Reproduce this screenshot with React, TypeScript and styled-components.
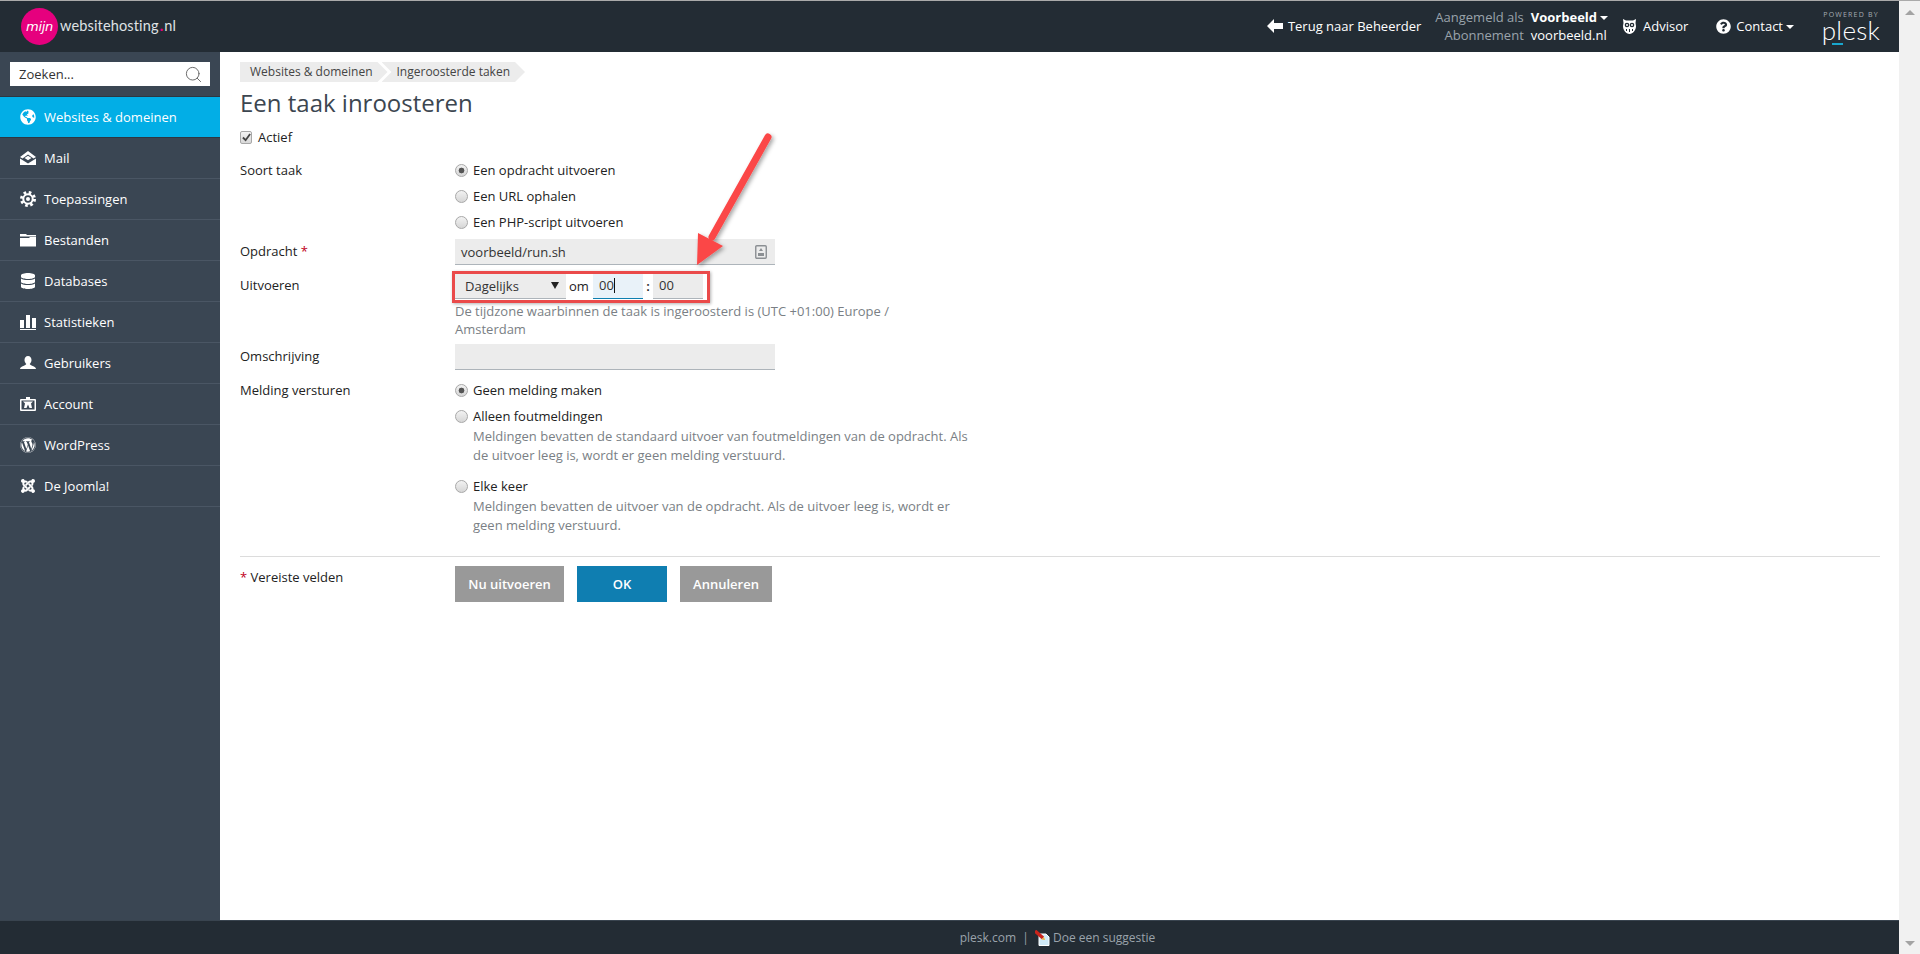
import React from "react";
import styled, { createGlobalStyle } from "styled-components";
import { FaGlobeAmericas, FaDatabase, FaWordpress, FaJoomla, FaQuestionCircle } from "react-icons/fa";
import { Search } from "lucide-react";

const Global = createGlobalStyle`
  html, body { margin: 0; padding: 0; height: 100%; overflow: hidden; }
  body { font-family: "Open Sans", "Liberation Sans", sans-serif; font-size: 13px; color: #222; }
  * { box-sizing: border-box; }
`;

const Page = styled.div`
  display: flex;
  width: 1920px;
  height: 954px;
  overflow: hidden;
`;
const Window = styled.div`
  flex: 1;
  min-width: 0;
  display: flex;
  flex-direction: column;
`;
const Scrollbar = styled.div`
  width: 21px;
  background: #f1f1f1;
  border-top: 1px solid #aaa;
  display: flex;
  flex-direction: column;
  justify-content: space-between;
  align-items: center;
  padding: 9px 0 8px;
`;
const ScrollArrow = styled.div<{ $down?: boolean }>`
  width: 0;
  height: 0;
  border-left: 5px solid transparent;
  border-right: 5px solid transparent;
  ${(p) => (p.$down ? "border-top: 5px solid #a3a3a3;" : "border-bottom: 5px solid #a3a3a3;")}
`;

const Header = styled.header`
  height: 52px;
  flex: none;
  background: #232c34;
  border-top: 1px solid #aaa;
  display: flex;
  align-items: center;
  color: #fff;
  padding-left: 21px;
`;
const Logo = styled.div`
  display: flex;
  align-items: center;
`;
const LogoCircle = styled.div`
  width: 37px;
  height: 37px;
  border-radius: 50%;
  background: #e6007e;
  color: #fff;
  display: flex;
  align-items: center;
  justify-content: center;
  font-family: "DejaVu Sans", sans-serif;
  font-style: italic;
  font-size: 13px;
  letter-spacing: -0.3px;
  margin-right: 2px;
`;
const LogoText = styled.div`
  font-family: "Lato", sans-serif;
  font-size: 14.5px;
  color: #dfe2e5;
  letter-spacing: 0.15px;
  margin-top: -2px;
`;
const LogoDot = styled.span`
  color: #e6007e;
  font-weight: 900;
  margin: 0 1px;
`;
const HeaderRight = styled.div`
  margin-left: auto;
  display: flex;
  align-items: center;
  height: 100%;
  padding-bottom: 1px;
`;
const HeaderLink = styled.div<{ $ml: number; $gap?: number }>`
  display: flex;
  align-items: center;
  gap: ${(p) => p.$gap ?? 5}px;
  margin-left: ${(p) => p.$ml}px;
  font-size: 13px;
  color: #fff;
`;
const Caret = styled.span`
  display: inline-block;
  width: 0;
  height: 0;
  border-left: 4px solid transparent;
  border-right: 4px solid transparent;
  border-top: 4px solid #fff;
  margin-left: 3px;
  vertical-align: 2px;
`;
const Account = styled.div`
  display: grid;
  grid-template-columns: auto auto;
  column-gap: 7px;
  margin-left: 14px;
  line-height: 18px;
`;
const AccountLabel = styled.div`
  color: #9aa3ab;
  text-align: right;
`;
const AccountValue = styled.div<{ $bold?: boolean }>`
  color: #fff;
  font-weight: ${(p) => (p.$bold ? 700 : 400)};
`;
const PleskBox = styled.div`
  margin: 0 19px 0 28px;
  width: 58px;
  display: flex;
  flex-direction: column;
  align-items: center;
  position: relative;
`;
const Powered = styled.div`
  font-size: 7px;
  letter-spacing: 1.2px;
  color: #a6adb3;
  line-height: 9px;
  white-space: nowrap;
`;
const PleskWord = styled.div`
  font-family: "Lato", sans-serif;
  font-weight: 300;
  font-size: 26px;
  line-height: 24px;
  letter-spacing: 0.3px;
  color: #fff;
  margin-top: -1px;
`;
const PleskBar = styled.div`
  position: absolute;
  left: 10px;
  bottom: -3px;
  width: 11px;
  height: 2px;
  background: #19a7ce;
`;

const Body = styled.div`
  flex: 1;
  min-height: 0;
  display: flex;
`;
const Sidebar = styled.nav`
  width: 220px;
  flex: none;
  background: #3a4653;
`;
const SearchBox = styled.div`
  height: 45px;
  padding: 10px 10px 0;
  border-bottom: 1px solid #2d3742;
`;
const SearchInner = styled.div`
  height: 24px;
  background: #fff;
  display: flex;
  align-items: center;
  justify-content: space-between;
  padding: 0 7px 0 9px;
  color: #333;
  font-size: 13px;
`;
const NavItem = styled.div<{ $active?: boolean }>`
  height: 41px;
  display: flex;
  align-items: center;
  gap: 8px;
  padding-left: 20px;
  font-size: 13px;
  color: #fff;
  background: ${(p) => (p.$active ? "#02aee6" : "transparent")};
  border-bottom: 1px solid ${(p) => (p.$active ? "#2d3742" : "#4a5664")};
  svg { width: 16px; height: 16px; flex: none; fill: #fff; }
`;

const Main = styled.main`
  flex: 1;
  min-width: 0;
  padding: 10px 19px 0 20px;
  background: #fff;
`;
const Crumbs = styled.div`
  display: flex;
  height: 20px;
`;
const Crumb = styled.div<{ $first?: boolean }>`
  background: #ececec;
  font-size: 12px;
  line-height: 20px;
  color: #444;
  padding: 0 15px 0 ${(p) => (p.$first ? 10 : 15)}px;
  margin-right: ${(p) => (p.$first ? -6 : 0)}px;
  clip-path: polygon(
    0 0, calc(100% - 10px) 0, 100% 50%, calc(100% - 10px) 100%, 0 100%
    ${(p) => (p.$first ? "" : ", 10px 50%")}
  );
`;
const Title = styled.h1`
  margin: 5px 0 0;
  font-size: 24px;
  font-weight: 400;
  line-height: 32px;
  color: #3c4650;
`;
const CheckRow = styled.div`
  display: flex;
  align-items: center;
  gap: 6px;
  height: 20px;
  margin-top: 8px;
`;
const CheckBox = styled.span`
  width: 12px;
  height: 13px;
  border: 1px solid #a8a8a8;
  border-radius: 2px;
  background: linear-gradient(#f4f4f4, #d8d8d8);
  display: flex;
  align-items: center;
  justify-content: center;
  svg { width: 9px; height: 9px; }
`;
const Form = styled.div`
  display: grid;
  grid-template-columns: 215px 1fr;
  margin-top: 10px;
`;
const Label = styled.div<{ $top?: number }>`
  line-height: 18px;
  padding-top: ${(p) => p.$top ?? 4}px;
`;
const Req = styled.span`
  color: #c0001a;
`;
const Field = styled.div<{ $mb?: number; $pt?: number }>`
  margin-bottom: ${(p) => p.$mb ?? 0}px;
  padding-top: ${(p) => p.$pt ?? 0}px;
`;
const RadioRow = styled.div`
  display: flex;
  align-items: center;
  gap: 5px;
  height: 26px;
`;
const Radio = styled.span<{ $on?: boolean }>`
  width: 13px;
  height: 13px;
  border-radius: 50%;
  border: 1px solid #a8a8a8;
  background: ${(p) =>
    p.$on
      ? "radial-gradient(circle, #555 0 2.6px, transparent 3.2px), linear-gradient(#f2f2f2, #d6d6d6)"
      : "linear-gradient(#f2f2f2, #d6d6d6)"};
`;
const RadioHint = styled.div<{ $mb: number }>`
  margin: -2px 0 ${(p) => p.$mb}px 18px;
  width: 500px;
  line-height: 19px;
  color: #7a7f85;
`;
const TextBox = styled.div`
  width: 320px;
  height: 26px;
  background: #ececec;
  border-bottom: 1px solid #adb4ba;
  display: flex;
  align-items: center;
  justify-content: space-between;
  padding: 0 8px 0 6px;
  color: #333;
`;
const Schedule = styled.div`
  position: relative;
  display: flex;
  align-items: center;
  height: 26px;
  margin-top: 8px;
`;
const RedBox = styled.div`
  position: absolute;
  left: -3px;
  top: -2px;
  width: 258px;
  height: 32px;
  border: 3px solid #ea4a4a;
  box-shadow: 1px 1px 3px rgba(0, 0, 0, 0.3);
  pointer-events: none;
`;
const SelectBox = styled.div`
  width: 111px;
  height: 26px;
  background: #ececec;
  border-bottom: 1px solid #adb4ba;
  display: flex;
  align-items: center;
  justify-content: space-between;
  padding: 0 7px 0 10px;
  color: #333;
  font-size: 13px;
`;
const SelectArrow = styled.span`
  width: 0;
  height: 0;
  border-left: 4px solid transparent;
  border-right: 4px solid transparent;
  border-top: 7px solid #222;
`;
const Om = styled.span`
  margin: 0 5px 0 3px;
  width: 19px;
`;
const TimeBox = styled.div<{ $focus?: boolean }>`
  width: 50px;
  height: 26px;
  display: flex;
  align-items: center;
  padding: 0 0 1px 6px;
  background: ${(p) => (p.$focus ? "#e9f2f9" : "#ececec")};
  border-bottom: 1px solid ${(p) => (p.$focus ? "#0e7fb0" : "#adb4ba")};
  color: #333;
`;
const TextCaret = styled.span`
  width: 1px;
  height: 15px;
  background: #111;
`;
const Colon = styled.span`
  width: 10px;
  text-align: center;
  font-weight: 600;
`;
const Hint = styled.div`
  width: 440px;
  margin: 3px 0 6px;
  line-height: 18px;
  color: #7a7f85;
`;
const Rule = styled.hr`
  border: 0;
  border-top: 1px solid #dcdcdc;
  margin: 21px 0 9px;
`;
const Actions = styled.div`
  display: grid;
  grid-template-columns: 215px 1fr;
`;
const Buttons = styled.div`
  display: flex;
  gap: 13px;
`;
const Button = styled.div<{ $w: number; $primary?: boolean }>`
  width: ${(p) => p.$w}px;
  height: 36px;
  display: flex;
  align-items: center;
  justify-content: center;
  font-weight: 600;
  font-size: 13px;
  color: #fff;
  background: ${(p) => (p.$primary ? "#0f7eb1" : "#999")};
`;
const Footer = styled.footer`
  height: 34px;
  flex: none;
  background: #232c34;
  border-top: 1px solid #39444f;
  display: flex;
  align-items: center;
  justify-content: center;
  gap: 3px;
  font-size: 12px;
  color: #9aa3ab;
  padding-left: 216px;
`;
const ArrowOverlay = styled.svg`
  position: absolute;
  left: 680px;
  top: 73px;
  width: 100px;
  height: 150px;
  pointer-events: none;
`;
const Stage = styled.div`
  position: relative;
  display: flex;
  width: 100%;
  height: 100%;
`;

const BarsIcon = () => (
  <svg viewBox="0 0 16 16"><path d="M0 6h4v8H0zM6 1h4v13H6zM12 4h4v10h-4zM0 15h16v1H0z" /></svg>
);
const MailIcon = () => (
  <svg viewBox="0 0 16 16"><path d="M8 1l8 6-2.500 1.500L8 4.500 2.500 8.500 0 7zM0 8.500l8 5 8-5V15H0zM4.500 8L8 5.700 11.500 8 8 10.300z" /></svg>
);
const GearIcon = () => (
  <svg viewBox="0 0 16 16">
    <circle cx="8" cy="8" r="6.500" fill="none" stroke="#fff" strokeWidth="3" strokeDasharray="2.550 2.550" />
    <circle cx="8" cy="8" r="4.700" fill="none" stroke="#fff" strokeWidth="2" />
    <circle cx="8" cy="8" r="2" />
  </svg>
);
const FolderIcon = () => (
  <svg viewBox="0 0 16 16"><path d="M0 2h6l1 1h9v1.500H0zM0 6h9l1-1h6v9.500H0z" /></svg>
);
const UserIcon = () => (
  <svg viewBox="0 0 16 16"><path d="M8 1c2.200 0 3.500 1.700 3.500 4 0 1.800-.9 3.200-1.800 4 .3.900 1.500 1.300 3 1.900 1.700.7 3.300 1.400 3.300 3.100H0c0-1.700 1.600-2.400 3.300-3.100 1.500-.6 2.700-1 3-1.900-.9-.8-1.800-2.200-1.800-4C4.500 2.700 5.800 1 8 1z" /></svg>
);
const AccountIcon = () => (
  <svg viewBox="0 0 16 16"><path fillRule="evenodd" d="M6 1h4v2h5a1 1 0 0 1 1 1v10a1 1 0 0 1-1 1H1a1 1 0 0 1-1-1V4a1 1 0 0 1 1-1h5zM1.500 4.500v9h13v-9zM3 5.500h10l-2 2 1 4.500H9.500L8 8.500 6.500 12H4l1-4.500z" /></svg>
);
const BackArrow = () => (
  <svg width="16" height="14" viewBox="0 0 16 14"><path fill="#fff" d="M0 7l7-7v4h9v6H7v4z" /></svg>
);
const Owl = () => (
  <svg width="13" height="16" viewBox="0 0 13 16">
    <path fill="#fff" d="M0 1l3 1.500h7L13 1l-.5 4 .5 3c0 4-3 8-6.500 8S0 12 0 8l.5-3z" />
    <circle cx="4" cy="7" r="2.300" fill="#232c34" />
    <circle cx="9" cy="7" r="2.300" fill="#232c34" />
    <circle cx="4" cy="7" r="1" fill="#fff" />
    <circle cx="9" cy="7" r="1" fill="#fff" />
    <path fill="#232c34" d="M3 11h1v2H3zM6 11h1v3H6zM9 11h1v2H9z" />
  </svg>
);
const SuggestIcon = () => (
  <svg width="15" height="16" viewBox="0 0 15 16">
    <path fill="#cfe9f7" stroke="#fff" strokeWidth="1" d="M4 4h7l3 3v8.500H4z" />
    <path stroke="#c9241b" strokeWidth="3.500" d="M0 1l8 7" />
    <path fill="#e8b23a" d="M6.500 9.500l2.500-2.500 1 3z" />
  </svg>
);
const ImportIcon = () => (
  <svg width="12" height="14" viewBox="0 0 12 14">
    <rect x="0.750" y="0.750" width="10.500" height="12.500" fill="#ececec" stroke="#8b8f93" strokeWidth="1.400" rx="1" />
    <path fill="#8b8f93" d="M6 3l2 3H4zM3 8h6v3H3z" />
  </svg>
);

const nav = [
  { label: "Mail", icon: <MailIcon /> },
  { label: "Toepassingen", icon: <GearIcon /> },
  { label: "Bestanden", icon: <FolderIcon /> },
  { label: "Databases", icon: <FaDatabase /> },
  { label: "Statistieken", icon: <BarsIcon /> },
  { label: "Gebruikers", icon: <UserIcon /> },
  { label: "Account", icon: <AccountIcon /> },
  { label: "WordPress", icon: <FaWordpress /> },
  { label: "De Joomla!", icon: <FaJoomla /> },
];

export default function App() {
  return (
    <Page>
      <Global />
      <Window>
        <Header>
          <Logo>
            <LogoCircle>mijn</LogoCircle>
            <LogoText>websitehosting<LogoDot>.</LogoDot>nl</LogoText>
          </Logo>
          <HeaderRight>
            <HeaderLink $ml={0}><BackArrow />Terug naar Beheerder</HeaderLink>
            <Account>
              <AccountLabel>Aangemeld als</AccountLabel>
              <AccountValue $bold>Voorbeeld<Caret /></AccountValue>
              <AccountLabel>Abonnement</AccountLabel>
              <AccountValue>voorbeeld.nl</AccountValue>
            </Account>
            <HeaderLink $ml={15} $gap={7}><Owl />Advisor</HeaderLink>
            <HeaderLink $ml={28}><FaQuestionCircle size={15} /><span>Contact<Caret /></span></HeaderLink>
            <PleskBox>
              <Powered>POWERED BY</Powered>
              <PleskWord>plesk</PleskWord>
              <PleskBar />
            </PleskBox>
          </HeaderRight>
        </Header>
        <Body>
          <Stage>
            <Sidebar>
              <SearchBox>
                <SearchInner>Zoeken...<Search size={19} color="#666" strokeWidth={1.200} /></SearchInner>
              </SearchBox>
              <NavItem $active><FaGlobeAmericas />Websites &amp; domeinen</NavItem>
              {nav.map((n) => (
                <NavItem key={n.label}>{n.icon}{n.label}</NavItem>
              ))}
            </Sidebar>
            <Main>
              <Crumbs>
                <Crumb $first>Websites &amp; domeinen</Crumb>
                <Crumb>Ingeroosterde taken</Crumb>
              </Crumbs>
              <Title>Een taak inroosteren</Title>
              <CheckRow>
                <CheckBox>
                  <svg viewBox="0 0 10 10"><path d="M1 5l3 3 5-7" fill="none" stroke="#444" strokeWidth="2" /></svg>
                </CheckBox>
                Actief
              </CheckRow>
              <Form>
                <Label>Soort taak</Label>
                <Field $mb={4}>
                  <RadioRow><Radio $on />Een opdracht uitvoeren</RadioRow>
                  <RadioRow><Radio />Een URL ophalen</RadioRow>
                  <RadioRow><Radio />Een PHP-script uitvoeren</RadioRow>
                </Field>
                <Label $top={3}>Opdracht <Req>*</Req></Label>
                <Field>
                  <TextBox>voorbeeld/run.sh<ImportIcon /></TextBox>
                </Field>
                <Label $top={11}>Uitvoeren</Label>
                <Field>
                  <Schedule>
                    <SelectBox>Dagelijks<SelectArrow /></SelectBox>
                    <Om>om</Om>
                    <TimeBox $focus>00<TextCaret /></TimeBox>
                    <Colon>:</Colon>
                    <TimeBox>00</TimeBox>
                    <RedBox />
                  </Schedule>
                  <Hint>De tijdzone waarbinnen de taak is ingeroosterd is (UTC +01:00) Europe / Amsterdam</Hint>
                </Field>
                <Label $top={3}>Omschrijving</Label>
                <Field>
                  <TextBox />
                </Field>
                <Label $top={11}>Melding versturen</Label>
                <Field $pt={7}>
                  <RadioRow><Radio $on />Geen melding maken</RadioRow>
                  <RadioRow><Radio />Alleen foutmeldingen</RadioRow>
                  <RadioHint $mb={8}>Meldingen bevatten de standaard uitvoer van foutmeldingen van de opdracht. Als de uitvoer leeg is, wordt er geen melding verstuurd.</RadioHint>
                  <RadioRow><Radio />Elke keer</RadioRow>
                  <RadioHint $mb={0}>Meldingen bevatten de uitvoer van de opdracht. Als de uitvoer leeg is, wordt er geen melding verstuurd.</RadioHint>
                </Field>
              </Form>
              <Rule />
              <Actions>
                <Label $top={2}><Req>*</Req> Vereiste velden</Label>
                <Buttons>
                  <Button $w={109}>Nu uitvoeren</Button>
                  <Button $w={90} $primary>OK</Button>
                  <Button $w={92}>Annuleren</Button>
                </Buttons>
              </Actions>
            </Main>
            <ArrowOverlay viewBox="0 0 100 150">
              <defs>
                <filter id="arrowShadow" x="-30%" y="-10%" width="160%" height="120%">
                  <feDropShadow dx="2" dy="2" stdDeviation="2" floodOpacity="0.35" />
                </filter>
              </defs>
              <g filter="url(#arrowShadow)">
                <path d="M88 12L32 112" stroke="#fb4747" strokeWidth="7" strokeLinecap="round" fill="none" />
                <path d="M17 140L18 108L43 121Z" fill="#fb4747" />
              </g>
            </ArrowOverlay>
          </Stage>
        </Body>
        <Footer>
          plesk.com&nbsp;&nbsp;|&nbsp;<SuggestIcon />Doe een suggestie
        </Footer>
      </Window>
      <Scrollbar>
        <ScrollArrow />
        <ScrollArrow $down />
      </Scrollbar>
    </Page>
  );
}
